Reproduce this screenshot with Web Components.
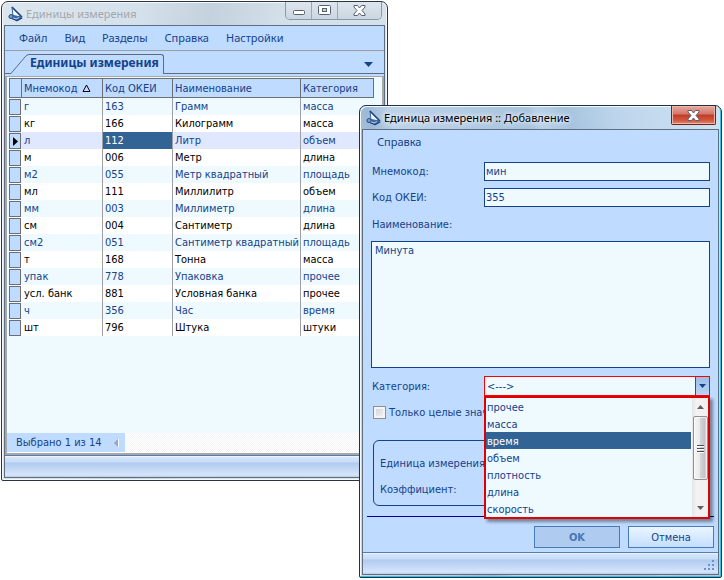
<!DOCTYPE html>
<html lang="ru">
<head>
<meta charset="utf-8">
<title>Единицы измерения</title>
<style>
    body {
        margin: 0;
        background: #fff;
    }
</style>
</head>
<body>
<unit-desktop></unit-desktop>

<script>
/**
 * Application window: frame, title bar, status bar
 */
class AppWindow extends HTMLElement {
    constructor() {
        super();
        this.attachShadow({ mode: 'open' });
    }

    connectedCallback() {
        const active = this.hasAttribute('active');
        const titleText = this.getAttribute('caption') || '';

        this.shadowRoot.innerHTML = `
            <style>
                :host {
                    display: flex;
                    flex-direction: column;
                    box-sizing: border-box;
                    border: 1px solid #2b3440;
                    border-radius: 7px 7px 2px 2px;
                    padding: 0 2px 2px;
                    background: linear-gradient(100deg, #dbe6ee 0, #d4e0ea 30%, #c3d2de 45%, #d3dfe9 60%, #d8e3ec 100%);
                    box-shadow: inset 0 0 0 1px #f4f8fb;
                }
                :host([active]) {
                    border-color: #1d3242;
                    background: linear-gradient(75deg, #c5dcf2 0, #b4cce5 20%, #9db9d5 27%, #bdd3ea 32%, #a9c4df 60%, #bad2e9 62%, #a6c3de 68%, #bdd5ec 78%, #cfe2f3 100%);
                    box-shadow: inset -1px -1px 0 #2fc3ea, inset 1px 1px 0 #f4f8fb;
                }
                header {
                    display: flex;
                    align-items: flex-start;
                    height: 23px;
                    padding-left: 4px;
                }
                .logo {
                    width: 16px;
                    height: 16px;
                    margin-top: 4px;
                }
                h1 {
                    flex: 1;
                    margin: 0 0 0 2px;
                    font: 11px/24px "Noto Sans", sans-serif;
                    color: #a4a8ad;
                    white-space: nowrap;
                }
                :host([active]) h1 {
                    color: #000;
                    text-shadow: 0 0 6px #fff, 0 0 4px #fff;
                }
                .buttons {
                    display: flex;
                    height: 17px;
                    margin-right: 3px;
                    border: 1px solid #8b98a5;
                    border-top: 0;
                    border-radius: 0 0 5px 5px;
                    overflow: hidden;
                }
                .buttons button {
                    display: grid;
                    place-items: center;
                    width: 26px;
                    padding: 0;
                    border: 0;
                    border-right: 1px solid #9ba8b4;
                    background: linear-gradient(#dde6ee, #cbd6e0);
                }
                .buttons button:last-child {
                    width: 43px;
                    border-right: 0;
                }
                :host([active]) .buttons {
                    height: 18px;
                    border-color: #6d241f;
                    border-radius: 0 0 2px 2px;
                }
                :host([active]) .buttons button {
                    background: linear-gradient(#e6aaa0 0, #d47666 45%, #c13b26 50%, #d2593f 80%, #e08a70 100%);
                    box-shadow: inset 0 0 0 1px #efb5a8;
                }
                .body {
                    flex: 1;
                    display: flex;
                    flex-direction: column;
                    border: 1px solid #5f6f80;
                    background: #bfdbff;
                }
                .content {
                    flex: 1;
                    display: flex;
                    flex-direction: column;
                }
                footer {
                    display: flex;
                    justify-content: flex-end;
                    align-items: flex-end;
                    height: 21px;
                    border-top: 1px solid #567db0;
                    background: linear-gradient(#fff 0, #d7e6f9 1px, #c7dcf8 6px, #b0cbf0 7px, #d6e5fa 19px, #b8cce4 100%);
                }
            </style>

            <header>
                <svg class="logo" viewBox="0 0 16 16" aria-hidden="true">
                    <path d="M0 11l5-3 10 4-6 3.500z" fill="#3c6aa5"/>
                    <path d="M1 11.500l8 3 5-2.500" fill="none" stroke="#1a3c70"/>
                    <path d="M3 11l5 2 3-1.500" fill="none" stroke="#b7d2ef"/>
                    <path d="M4 1.500L13.500 11 5 9.500z" fill="#f6faff" stroke="#3565a0"/>
                    <path d="M4 1l10 10" stroke="#1d457f" stroke-width="1.500"/>
                    <circle cx="3" cy="10.500" r="2" fill="#7b9cc6" stroke="#2b548c"/>
                </svg>
                <h1>${titleText}</h1>
                <div class="buttons">
                    ${active ? '' : `
                    <button type="button" aria-label="Свернуть">
                        <svg width="14" height="8" viewBox="0 0 14 8"><rect x="1.500" y="3.500" width="11" height="4" rx="1" fill="#fff" stroke="#596070"/></svg>
                    </button>
                    <button type="button" aria-label="Развернуть">
                        <svg width="13" height="11" viewBox="0 0 13 11">
                            <rect x=".5" y=".5" width="12" height="9" rx="1" fill="#fff" stroke="#596070"/>
                            <rect x="4.500" y="3.500" width="4" height="3" fill="#c7d2df" stroke="#596070"/>
                        </svg>
                    </button>`}
                    <button type="button" aria-label="Закрыть">
                        <svg width="13" height="11" viewBox="0 0 13 11">
                            <path d="M1 .5h3.500l2 2.500 2-2.500H12v1.500L9 5.500l3 3.500v1.500H8.500L6.500 8l-2 2.500H1V9l3-3.500L1 2z" fill="#fff" stroke="#596070"/>
                        </svg>
                    </button>
                </div>
            </header>
            <div class="body">
                <div class="content"><slot></slot></div>
                <footer>
                    ${active ? `
                    <svg width="14" height="14" viewBox="0 0 14 14" fill="#6593cf" aria-hidden="true">
                        <path d="M8 0h2v2H8zM8 4h2v2H8zM4 4h2v2H4zM8 8h2v2H8zM4 8h2v2H4zM0 8h2v2H0z"/>
                    </svg>` : ''}
                </footer>
            </div>
        `;
    }
}
customElements.define('app-window', AppWindow);

/**
 * Menu bar, items come as a comma separated list
 */
class MenuBar extends HTMLElement {
    constructor() {
        super();
        this.attachShadow({ mode: 'open' });
    }

    connectedCallback() {
        const items = this.getAttribute('items').split(',');

        this.shadowRoot.innerHTML = `
            <style>
                :host {
                    display: block;
                }
                nav {
                    display: flex;
                    gap: 17px;
                    padding-left: 14px;
                }
                button {
                    padding: 0;
                    border: 0;
                    background: none;
                    color: #15428b;
                    font: 11px/24px "Noto Sans", sans-serif;
                }
            </style>
            <nav>${items.map(item => `<button type="button">${item}</button>`).join('')}</nav>
        `;
    }
}
customElements.define('menu-bar', MenuBar);

/**
 * Tab strip with one open tab
 */
class TabStrip extends HTMLElement {
    constructor() {
        super();
        this.attachShadow({ mode: 'open' });
    }

    connectedCallback() {
        this.shadowRoot.innerHTML = `
            <style>
                :host {
                    display: flex;
                    align-items: flex-end;
                    height: 22px;
                    border-top: 1px solid #9a9fa8;
                    border-bottom: 1px solid #5c6c85;
                }
                .slope {
                    display: block;
                    margin-bottom: -1px;
                }
                .tab {
                    height: 20px;
                    margin-bottom: -1px;
                    padding: 0 4px 3px 1px;
                    border: 1px solid #5c6c85;
                    border-width: 1px 1px 0 0;
                    border-radius: 0 3px 0 0;
                    background: #bfdbff;
                    color: #15428b;
                    font: bold 12px/16px "Noto Sans", sans-serif;
                    box-sizing: border-box;
                    white-space: nowrap;
                }
                .more {
                    margin: 0 11px 6px auto;
                    padding: 0;
                    border: 0;
                    background: none;
                    line-height: 0;
                }
            </style>
            <svg class="slope" width="24" height="20" viewBox="0 0 24 20" aria-hidden="true">
                <path d="M6 19.500L20 3Q22 .5 24 .5V20H6z" fill="#bfdbff"/>
                <path d="M0 19.500H6L20 3Q22 .5 24 .5" fill="none" stroke="#5c6c85"/>
            </svg>
            <button type="button" class="tab" role="tab" aria-selected="true">${this.getAttribute('label')}</button>
            <button type="button" class="more" aria-label="Вкладки">
                <svg width="9" height="5" viewBox="0 0 9 5"><path d="M0 0h9L4.500 5z" fill="#15428b"/></svg>
            </button>
        `;
    }
}
customElements.define('tab-strip', TabStrip);

/**
 * Table of units
 */
class UnitGrid extends HTMLElement {
    constructor() {
        super();
        this.attachShadow({ mode: 'open' });
        this._rows = [
            ['г', '163', 'Грамм', 'масса'],
            ['кг', '166', 'Килограмм', 'масса'],
            ['л', '112', 'Литр', 'объем'],
            ['м', '006', 'Метр', 'длина'],
            ['м2', '055', 'Метр квадратный', 'площадь'],
            ['мл', '111', 'Миллилитр', 'объем'],
            ['мм', '003', 'Миллиметр', 'длина'],
            ['см', '004', 'Сантиметр', 'длина'],
            ['см2', '051', 'Сантиметр квадратный', 'площадь'],
            ['т', '168', 'Тонна', 'масса'],
            ['упак', '778', 'Упаковка', 'прочее'],
            ['усл. банк', '881', 'Условная банка', 'прочее'],
            ['ч', '356', 'Час', 'время'],
            ['шт', '796', 'Штука', 'штуки']
        ];
        this._selected = 2;
    }

    connectedCallback() {
        this.render();
    }

    render() {
        const rows = this._rows.map((row, i) => `
            <tr class="${i === this._selected ? 'selected' : ''}">
                <td class="mark"><div>${i === this._selected ? '<svg width="5" height="9" viewBox="0 0 5 9"><path d="M0 0l5 4.500L0 9z"/></svg>' : ''}</div></td>
                ${row.map(cell => `<td>${cell}</td>`).join('')}
            </tr>`).join('');

        this.shadowRoot.innerHTML = `
            <style>
                :host {
                    flex: 1;
                    display: flex;
                    flex-direction: column;
                    margin-top: 2px;
                    border: 2px solid #a5a7a9;
                    border-width: 1px 2px 2px;
                    background: #eefaff;
                }
                .scroll {
                    flex: 1;
                    padding: 1px 8px 0 2px;
                }
                table {
                    width: 100%;
                    table-layout: fixed;
                    border-collapse: separate;
                    border-spacing: 0;
                    font: 11px/17px "DejaVu Sans Condensed", "DejaVu Sans", sans-serif;
                }
                .c0 { width: 13px; }
                .c1 { width: 81px; }
                .c2 { width: 70px; }
                .c4 { width: 73px; }
                th, td {
                    padding: 0 0 0 2px;
                    text-align: left;
                    font-weight: normal;
                    white-space: nowrap;
                }
                th {
                    height: 20px;
                    box-sizing: border-box;
                    border: 1px solid #6b6e73;
                    border-left-width: 0;
                    background: #bfdbff;
                    color: #15428b;
                }
                th:first-child {
                    border-left-width: 1px;
                }
                th svg {
                    margin-left: 1px;
                }
                td {
                    height: 17px;
                    border-right: 1px solid #a0a0a0;
                    color: #000;
                    background: #fff;
                }
                td:last-child {
                    border-right: 0;
                }
                tr:nth-child(odd) td {
                    background: #eefaff;
                    color: #15428b;
                }
                tr.selected td {
                    background: #dfe8ff;
                }
                tr.selected td:nth-child(3) {
                    background: #316395;
                    color: #fff;
                }
                td.mark, tr td.mark {
                    padding: 0;
                    border: 0;
                }
                .mark div {
                    display: grid;
                    place-items: center;
                    box-sizing: border-box;
                    height: 16px;
                    margin: 1px 1px 0 0;
                    border: 1px solid #6b6e73;
                    background: #bfdbff;
                    color: #000;
                }
                .status {
                    display: flex;
                    height: 19px;
                    background: repeating-conic-gradient(#f4f4f4 0 25%, #fff 0 50%) 0 0 / 2px 2px;
                    border-bottom: 1px solid #fff;
                }
                .count {
                    display: flex;
                    align-items: center;
                    gap: 12px;
                    padding: 0 6px 0 9px;
                    background: #bfdbff;
                    color: #15428b;
                    font: 11px/19px "DejaVu Sans Condensed", "DejaVu Sans", sans-serif;
                }
            </style>
            <div class="scroll">
                <table>
                    <colgroup><col class="c0"><col class="c1"><col class="c2"><col><col class="c4"></colgroup>
                    <thead>
                        <tr>
                            <th></th>
                            <th>Мнемокод <svg width="9" height="8" viewBox="0 0 9 8"><path d="M4.500 1L8 7.500H1z" fill="none" stroke="#000"/></svg></th>
                            <th>Код ОКЕИ</th>
                            <th>Наименование</th>
                            <th>Категория</th>
                        </tr>
                    </thead>
                    <tbody>${rows}</tbody>
                </table>
            </div>
            <div class="status">
                <div class="count">
                    <span>Выбрано 1 из 14</span>
                    <svg width="5" height="8" viewBox="0 0 5 8"><path d="M4 0v8L0 4z" fill="#9aa5b3"/><path d="M4.500 0v8" stroke="#fff"/></svg>
                </div>
            </div>
        `;
    }
}
customElements.define('unit-grid', UnitGrid);

/**
 * Category drop-down with its open list
 */
class CategoryPicker extends HTMLElement {
    constructor() {
        super();
        this.attachShadow({ mode: 'open' });
        this._items = ['прочее', 'масса', 'время', 'объем', 'плотность', 'длина', 'скорость'];
        this._current = 'время';
    }

    connectedCallback() {
        const items = this._items.map(item =>
            `<li role="option" aria-selected="${item === this._current}">${item}</li>`).join('');

        this.shadowRoot.innerHTML = `
            <style>
                :host {
                    display: grid;
                    grid-template-columns: 112px 1fr;
                    align-items: center;
                    color: #15428b;
                    font: 11px/17px "DejaVu Sans Condensed", "DejaVu Sans", sans-serif;
                }
                .box {
                    position: relative;
                }
                select {
                    display: block;
                    width: 100%;
                    height: 20px;
                    box-sizing: border-box;
                    padding: 0 16px 0 2px;
                    border: 1px solid #f00;
                    border-radius: 0;
                    outline: 0;
                    appearance: none;
                    background: #eefaff;
                    color: inherit;
                    font: inherit;
                }
                .arrow {
                    position: absolute;
                    top: 0;
                    right: 0;
                    box-sizing: border-box;
                    display: grid;
                    place-items: center;
                    width: 15px;
                    height: 20px;
                    border: 1px solid #f00;
                    background: linear-gradient(#9bbce6, #b9d5f5);
                    pointer-events: none;
                }
                .popup {
                    position: absolute;
                    top: 20px;
                    left: 0;
                    right: 0;
                    z-index: 1;
                    display: flex;
                    border: 2px solid #e00000;
                    background: #eefaff;
                    box-shadow: 3px 3px 3px #0006;
                }
                ul {
                    flex: 1;
                    margin: 0 1px 0 0;
                    padding: 0;
                    list-style: none;
                }
                li {
                    padding-left: 1px;
                    height: 17px;
                    line-height: 19px;
                }
                li[aria-selected=true] {
                    background: #316395;
                    color: #fff;
                }
                .bar {
                    display: flex;
                    flex-direction: column;
                    align-items: center;
                    width: 16px;
                    background: linear-gradient(90deg, #e6e6e6, #f3f3f3 30%, #efefef);
                }
                .bar button {
                    display: grid;
                    place-items: center;
                    width: 16px;
                    height: 18px;
                    padding: 0;
                    border: 0;
                    background: none;
                }
                .thumb {
                    display: grid;
                    place-items: center;
                    box-sizing: border-box;
                    width: 15px;
                    height: 64px;
                    margin-bottom: auto;
                    border: 1px solid #8f8f8f;
                    border-radius: 2px;
                    background: linear-gradient(90deg, #f6f6f6, #e9e9ea 45%, #d2d3d6 50%, #c4c5c9 80%, #e0e0e2);
                    box-shadow: inset 0 0 0 1px #fff9;
                }
            </style>
            <label for="category">Категория:</label>
            <div class="box">
                <select id="category"><option>&lt;---&gt;</option></select>
                <span class="arrow"><svg width="7" height="4" viewBox="0 0 7 4"><path d="M0 0h7L3.500 4z" fill="#15428b"/></svg></span>
                <div class="popup">
                    <ul role="listbox" aria-label="Категория">${items}</ul>
                    <div class="bar">
                        <button type="button" aria-label="Вверх"><svg width="7" height="4" viewBox="0 0 7 4"><path d="M3.500 0L7 4H0z" fill="#606060"/></svg></button>
                        <div class="thumb"><svg width="7" height="9" viewBox="0 0 7 9"><path d="M0 1.500h7M0 4.500h7M0 7.500h7" stroke="#4c5055"/><path d="M0 2.500h7M0 5.500h7M0 8.500h7" stroke="#fff"/></svg></div>
                        <button type="button" aria-label="Вниз"><svg width="7" height="4" viewBox="0 0 7 4"><path d="M0 0h7L3.500 4z" fill="#606060"/></svg></button>
                    </div>
                </div>
            </div>
        `;
    }
}
customElements.define('category-picker', CategoryPicker);

/**
 * Form for adding a unit
 */
class UnitForm extends HTMLElement {
    constructor() {
        super();
        this.attachShadow({ mode: 'open' });
    }

    connectedCallback() {
        this.shadowRoot.innerHTML = `
            <style>
                :host {
                    flex: 1;
                    display: flex;
                    color: #15428b;
                    font: 11px/17px "DejaVu Sans Condensed", "DejaVu Sans", sans-serif;
                }
                form {
                    flex: 1;
                    display: flex;
                    flex-direction: column;
                    padding: 8px 4px 4px;
                }
                .fields {
                    flex: 1;
                    display: flex;
                    flex-direction: column;
                    gap: 7px;
                    padding: 0 4px 0 5px;
                    margin-bottom: 10px;
                }
                .row {
                    display: grid;
                    grid-template-columns: 112px 1fr;
                    align-items: center;
                }
                input[type=text], textarea {
                    box-sizing: border-box;
                    width: 100%;
                    margin: 0;
                    border: 1px solid #15428b;
                    border-radius: 0;
                    outline: 0;
                    background: #eefaff;
                    color: inherit;
                    font: inherit;
                }
                input[type=text] {
                    height: 19px;
                    padding: 0 1px;
                }
                .name {
                    flex: 1;
                    display: flex;
                    flex-direction: column;
                    gap: 8px;
                    margin: 2px 0 0 -1px;
                }
                .name label {
                    padding: 0 1px;
                }
                textarea {
                    flex: 1;
                    display: block;
                    padding: 0 3px;
                    resize: none;
                }
                category-picker {
                    margin-top: 1px;
                }
                .check {
                    display: flex;
                    align-items: center;
                    gap: 3px;
                    margin-top: 1px;
                    padding-left: 1px;
                }
                .check input {
                    appearance: none;
                    width: 13px;
                    height: 13px;
                    box-sizing: border-box;
                    margin: 0;
                    border: 1px solid #8e8f8f;
                    background: linear-gradient(135deg, #cbcfd5, #f6f6f6);
                    box-shadow: inset 0 0 0 2px #f4f4f4;
                }
                fieldset {
                    display: flex;
                    flex-direction: column;
                    gap: 9px;
                    margin: 12px 4px 0 1px;
                    padding: 14px 6px 7px;
                    border: 1px solid #15428b;
                    border-radius: 6px;
                    min-width: 0;
                }
                .actions {
                    display: flex;
                    justify-content: flex-end;
                    gap: 8px;
                    padding-top: 9px;
                    border-top: 1px solid #00008b;
                }
                .actions button {
                    width: 86px;
                    height: 22px;
                    padding: 0;
                    border: 1px solid #4a7ab5;
                    border-radius: 0;
                    background: linear-gradient(#eaf6ff, #c4deff);
                    color: #15428b;
                    font: inherit;
                }
                .actions button:disabled {
                    background: #afcbf0;
                    color: #4677b4;
                    font-weight: bold;
                }
            </style>
            <form>
                <div class="fields">
                    <div class="row">
                        <label for="code">Мнемокод:</label>
                        <input type="text" id="code" value="мин">
                    </div>
                    <div class="row">
                        <label for="okei">Код ОКЕИ:</label>
                        <input type="text" id="okei" value="355">
                    </div>
                    <div class="name">
                        <label for="name">Наименование:</label>
                        <textarea id="name">Минута</textarea>
                    </div>
                    <category-picker></category-picker>
                    <div class="check">
                        <input type="checkbox" id="whole">
                        <label for="whole">Только целые знач</label>
                    </div>
                    <fieldset>
                        <span>Единица измерения:</span>
                        <span>Коэффициент:</span>
                    </fieldset>
                </div>
                <div class="actions">
                    <button type="submit" disabled>OK</button>
                    <button type="button">Отмена</button>
                </div>
            </form>
        `;
    }
}
customElements.define('unit-form', UnitForm);

/**
 * Desktop that holds both windows
 */
class UnitDesktop extends HTMLElement {
    constructor() {
        super();
        this.attachShadow({ mode: 'open' });
        this.shadowRoot.innerHTML = `
            <style>
                :host {
                    display: block;
                    position: relative;
                    min-height: 100vh;
                    overflow: hidden;
                }
                app-window {
                    position: absolute;
                }
                .main {
                    top: 1px;
                    left: 1px;
                    width: calc(50% + 25px);
                    bottom: 99px;
                }
                .dialog {
                    top: 105px;
                    right: 2px;
                    width: calc(50% + 1px);
                    bottom: 2px;
                }
            </style>
            <app-window class="main" caption="Единицы измерения">
                <menu-bar items="Файл,Вид,Разделы,Справка,Настройки"></menu-bar>
                <tab-strip label="Единицы измерения"></tab-strip>
                <unit-grid></unit-grid>
            </app-window>
            <app-window class="dialog" caption="Единица измерения :: Добавление" active>
                <menu-bar items="Справка"></menu-bar>
                <unit-form></unit-form>
            </app-window>
        `;
    }
}
customElements.define('unit-desktop', UnitDesktop);
</script>
</body>
</html>
